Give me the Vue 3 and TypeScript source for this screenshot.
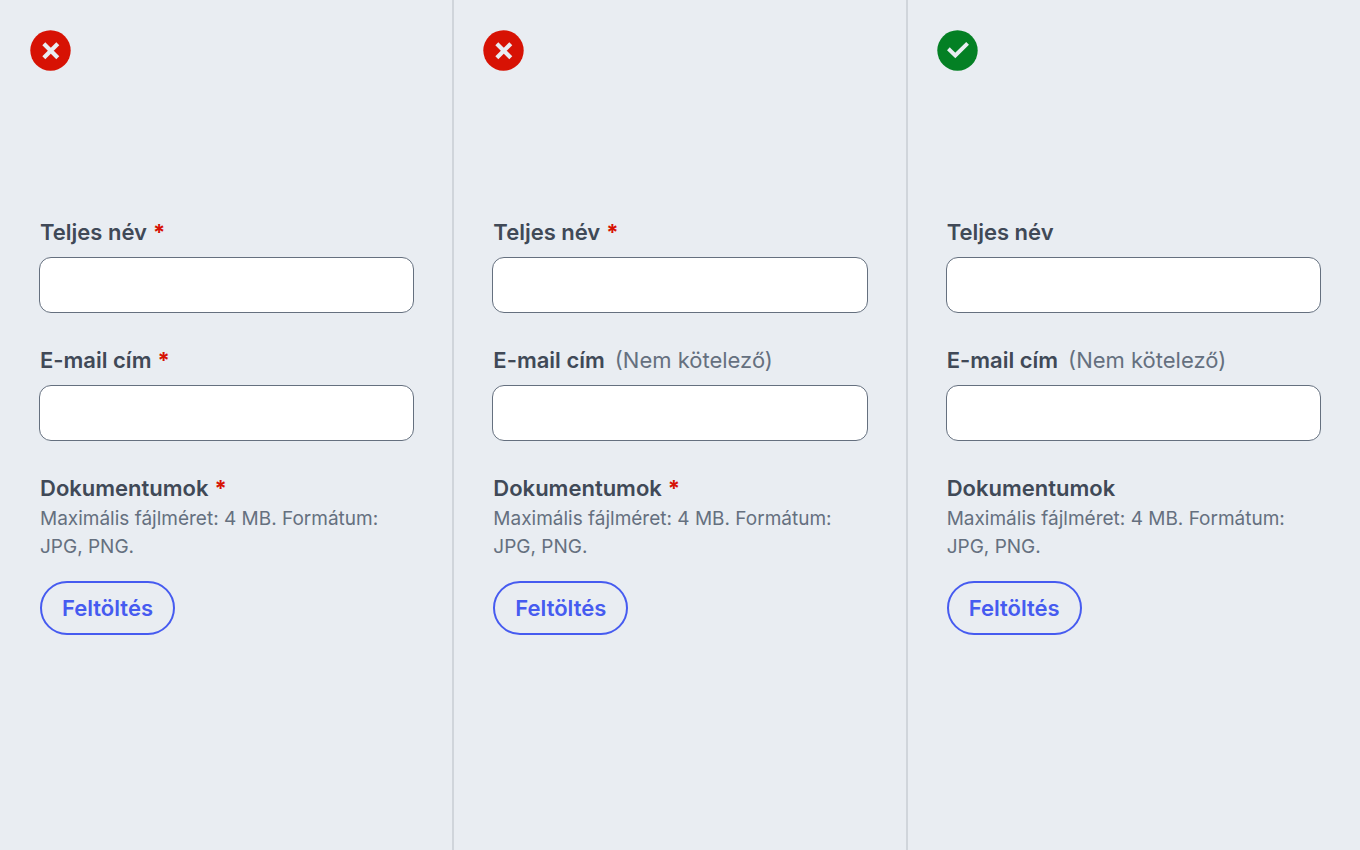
<script setup lang="ts">
interface Field {
  label: string
  required: boolean
  optional: boolean
}

interface Example {
  id: string
  good: boolean
  fields: Field[]
  filesRequired: boolean
}

const field = (label: string, required = false, optional = false): Field => ({ label, required, optional })

const examples: Example[] = [
  { id: 'all-marked', good: false, fields: [field('Teljes név', true), field('E-mail cím', true)], filesRequired: true },
  { id: 'mixed', good: false, fields: [field('Teljes név', true), field('E-mail cím', false, true)], filesRequired: true },
  { id: 'optional-only', good: true, fields: [field('Teljes név'), field('E-mail cím', false, true)], filesRequired: false },
]
</script>

<template>
  <main class="board">
    <section v-for="example in examples" :key="example.id" class="example">
      <svg class="verdict" viewBox="0 0 41 41" aria-hidden="true">
        <circle cx="20.5" cy="20.5" r="20.2" :fill="example.good ? '#048024' : '#d71204'" />
        <path
          v-if="example.good"
          d="M12.8 20.1 L18.3 25.5 L29.2 14.7"
          fill="none"
          stroke="#e9edf2"
          stroke-width="3.9"
          stroke-linecap="square"
          stroke-linejoin="miter"
        />
        <path
          v-else
          d="M15.3 15.3 L26.3 26.3 M26.3 15.3 L15.3 26.3"
          fill="none"
          stroke="#e9edf2"
          stroke-width="4.2"
          stroke-linecap="square"
        />
      </svg>
      <form class="form" @submit.prevent>
        <div v-for="(item, index) in example.fields" :key="item.label" class="field">
          <label class="label" :for="`${example.id}-${index}`">
            <span>{{ item.label }}</span>
            <span v-if="item.required" class="star">*</span>
            <span v-if="item.optional" class="optional">(Nem kötelező)</span>
          </label>
          <input :id="`${example.id}-${index}`" class="input" type="text" />
        </div>
        <div class="files">
          <label class="label" :for="`${example.id}-upload`">
            <span>Dokumentumok</span>
            <span v-if="example.filesRequired" class="star">*</span>
          </label>
          <p class="hint">Maximális fájlméret: 4 MB. Formátum: JPG, PNG.</p>
          <button :id="`${example.id}-upload`" class="upload" type="button">Feltöltés</button>
        </div>
      </form>
    </section>
  </main>
</template>

<style>
body {
  margin: 0;
  background: #e9edf2;
}
</style>

<style scoped>
.board {
  display: grid;
  grid-template-columns: repeat(3, minmax(0, 1fr));
  min-height: 100vh;
  background: #e9edf2;
  font-family: Inter, "Liberation Sans", sans-serif;
  color: #404957;
}

.example {
  box-sizing: border-box;
  padding: 30px 39px;
}

.example + .example {
  margin-left: -1px;
  padding-left: 38px;
  border-left: 2px solid #d0d5db;
}

.verdict {
  display: block;
  width: 41px;
  height: 41px;
  margin-left: -9px;
}

.form {
  margin-top: 147px;
}

.field {
  margin-bottom: 33px;
}

.label {
  display: flex;
  gap: 6px;
  margin-left: 1px;
  font-size: 22px;
  line-height: 28px;
  font-weight: 600;
}

.star {
  color: #d71204;
  font-weight: 700;
}

.optional {
  margin-left: 4px;
  font-weight: 400;
  color: #65707f;
}

.input {
  display: block;
  box-sizing: border-box;
  width: 100%;
  height: 56px;
  margin: 11px 0 0;
  padding: 0 16px;
  border: 1px solid #65707f;
  border-radius: 12px;
  background: #fff;
  font: inherit;
  font-size: 22px;
}

.files {
  padding-left: 1px;
}

.files .label {
  margin-left: 0;
}

.hint {
  margin: 3px 0 0;
  font-size: 19px;
  line-height: 28px;
  color: #65707f;
}

.upload {
  display: block;
  height: 54px;
  margin: 20px 0 0;
  padding: 0 20px;
  border: 2px solid #465bf0;
  border-radius: 27px;
  background: transparent;
  color: #465bf0;
  font: inherit;
  font-size: 22px;
  font-weight: 600;
}
</style>
